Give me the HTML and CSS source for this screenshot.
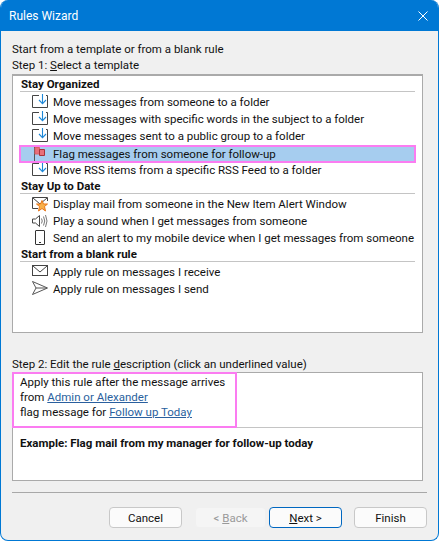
FILE: index.html
```html
<!DOCTYPE html>
<html lang="en">
<head>
<meta charset="utf-8">
<title>Rules Wizard</title>
<link rel="stylesheet" href="styles.css">
</head>
<body>
<svg class="defs" width="0" height="0" aria-hidden="true">
  <symbol id="move" viewBox="0 0 18 17">
    <path d="M8 1.500H1.500V13.500H16.500V1.500H15" fill="#fff" stroke="#444" stroke-width="1"/>
    <path d="M11.500 0V9.500" stroke="#1e88d8" stroke-width="1.100" fill="none"/>
    <path d="M8 6L11.500 9.700L15 6" stroke="#1e88d8" stroke-width="1.100" fill="none"/>
  </symbol>
</svg>
<div class="window">
  <header class="titlebar">
    <span class="title">Rules Wizard</span>
    <svg class="close" width="10" height="10" viewBox="0 0 10 10"><path d="M.5.5L9.500 9.500M9.500.5L.5 9.500" stroke="#fff" stroke-width="1" fill="none"/></svg>
  </header>
  <main class="content">
    <div class="intro">Start from a template or from a blank rule</div>
    <div class="label">Step 1: <u>S</u>elect a template</div>
    <div class="listbox">
      <div class="group">Stay Organized</div>
      <div class="item"><svg class="ico" width="18" height="17"><use href="#move"/></svg><span>Move messages from someone to a folder</span></div>
      <div class="item"><svg class="ico" width="18" height="17"><use href="#move"/></svg><span>Move messages with specific words in the subject to a folder</span></div>
      <div class="item"><svg class="ico" width="18" height="17"><use href="#move"/></svg><span>Move messages sent to a public group to a folder</span></div>
      <div class="item selected">
        <svg class="ico" width="18" height="17" viewBox="0 0 18 17"><path d="M3.500 1V15.500" stroke="#555" stroke-width="1"/><path d="M4 1.500H8.500V8H4Z" fill="#e8707a" stroke="#dc5f68" stroke-width="1"/><path d="M8.500 3.500H13.500V9.500H8.500Z" fill="#e8707a" stroke="#a8323a" stroke-width="1"/></svg>
        <span>Flag messages from someone for follow-up</span>
      </div>
      <div class="item"><svg class="ico" width="18" height="17"><use href="#move"/></svg><span>Move RSS items from a specific RSS Feed to a folder</span></div>
      <div class="group">Stay Up to Date</div>
      <div class="item"><svg class="ico" width="18" height="17" viewBox="0 0 18 17"><path d="M7 12.500H1.500V1.500H16.500V5" fill="#fff" stroke="#444"/><path d="M2 2L9 8L16 2" fill="none" stroke="#444"/><path d="M11 4.500L12.500 8H16.500L13.500 10.500L14.500 15L11 12.500L7.500 15L8.500 10.500L5.500 8H9.500Z" fill="#f8b04a" stroke="#e8761a" stroke-width="1"/></svg><span>Display mail from someone in the New Item Alert Window</span></div>
      <div class="item"><svg class="ico" width="18" height="17" viewBox="0 0 18 17"><path d="M1.500 6H4.500L8.500 2.500V13.500L4.500 10H1.500Z" fill="#fff" stroke="#444"/><path d="M10.500 5.500Q12 8 10.500 10.500M12.500 3.500Q15 8 12.500 12.500M14.500 2Q17.500 8 14.500 14" fill="none" stroke="#777"/></svg><span>Play a sound when I get messages from someone</span></div>
      <div class="item"><svg class="ico" width="18" height="17" viewBox="0 0 18 17"><rect x="4.500" y=".5" width="9" height="14" rx=".5" fill="#fff" stroke="#333"/><path d="M8 12.500H10" stroke="#333" stroke-width="1.200"/></svg><span>Send an alert to my mobile device when I get messages from someone</span></div>
      <div class="group">Start from a blank rule</div>
      <div class="item"><svg class="ico" width="18" height="17" viewBox="0 0 18 17"><rect x="1.500" y="1.500" width="15" height="10" fill="#fff" stroke="#444"/><path d="M2 2L9 8L16 2" fill="none" stroke="#444"/></svg><span>Apply rule on messages I receive</span></div>
      <div class="item"><svg class="ico" width="18" height="17" viewBox="0 0 18 17"><path d="M1.500 .5L16.500 7L1.500 13.500L5 7Z" fill="#fff" stroke="#555"/><path d="M5 7H16" stroke="#555"/></svg><span>Apply rule on messages I send</span></div>
    </div>
    <div class="label step2">Step 2: Edit the rule <u>d</u>escription (click an underlined value)</div>
    <div class="descbox">
      <div class="rule">
        <div>Apply this rule after the message arrives</div>
        <div>from <a href="#">Admin or Alexander</a></div>
        <div>flag message for <a href="#">Follow up Today</a></div>
      </div>
      <div class="example">Example: Flag mail from my manager for follow-up today</div>
    </div>
    <hr class="sep">
    <div class="buttons">
      <button class="btn" type="button">Cancel</button>
      <button class="btn back" type="button" disabled>&lt; <u>B</u>ack</button>
      <button class="btn next" type="button"><u>N</u>ext &gt;</button>
      <button class="btn finish" type="button">Finish</button>
    </div>
  </main>
</div>
</body>
</html>
```
FILE: styles.css
```css
* { box-sizing: border-box; }
html, body { margin: 0; padding: 0; }
body { width: 439px; height: 541px; overflow: hidden; background: #fff; font-family: Roboto, "Open Sans", sans-serif; font-size: 11.5px; color: #111; }
.defs { position: absolute; }
.window { width: 439px; height: 541px; display: flex; flex-direction: column; background: #f0f0f0; border: 1px solid #0078d4; border-top: 0; border-radius: 8px; overflow: hidden; }
.titlebar { height: 31px; flex: none; margin: 0 -1px; background: #0078d4; color: #fff; display: flex; align-items: center; justify-content: space-between; padding: 0 11px 0 9px; }
.title { font-size: 12px; }
.content { flex: 1; padding: 10px 11px 0 11px; display: flex; flex-direction: column; }
.intro, .label { height: 16px; line-height: 16px; }
.listbox { width: 411px; height: 259px; margin-top: 1px; background: #fff; border: 1px solid #aaa; border-top-width: 2px; padding: 1px 7px 0; }
.group { height: 15px; line-height: 14px; padding-left: 1px; font-weight: 700; border-bottom: 1px solid #c4c4c4; margin-bottom: 2px; }
.item { height: 17px; line-height: 17px; display: flex; align-items: center; padding-left: 11px; white-space: nowrap; }
.ico { flex: none; margin-right: 4px; }
.selected { background: #a6cdef; outline: 2px solid #fb7cf1; outline-offset: -1px; height: 16px; margin-top: 1px; position: relative; }
.step2 { margin-top: 23px; }
.descbox { width: 411px; height: 109px; background: #fff; border: 1px solid #aaa; display: flex; flex-direction: column; position: relative; }
.rule { height: 55px; padding: 2px 7px 0; line-height: 15px; border-bottom: 1px solid #c4c4c4; }
.rule::after { content: ""; box-sizing: border-box; position: absolute; left: -1px; top: -1px; width: 225px; height: 56px; border: 2px solid #fb7cf1; pointer-events: none; }
.rule a { color: #2a5f9e; text-decoration: underline; }
.example { padding: 8px 7px; font-weight: 700; }
.sep { width: 415px; height: 0; border: 0; border-top: 1px solid #a8a8a8; margin: 11px 0 0; }
.buttons { display: flex; margin-top: 14px; padding-left: 97px; }
.btn { width: 73px; height: 21px; padding: 0; font: inherit; color: #111; background: #fbfbfb; border: 1px solid #c8c8c8; border-radius: 4px; }
.back { margin-left: 13px; width: 71px; margin-right: 3px; background: #f5f5f5; border-color: #f0f0f0; color: #9a9a9a; }
.next { border-color: #0067c0; }
.finish { margin-left: 12px; }
```
